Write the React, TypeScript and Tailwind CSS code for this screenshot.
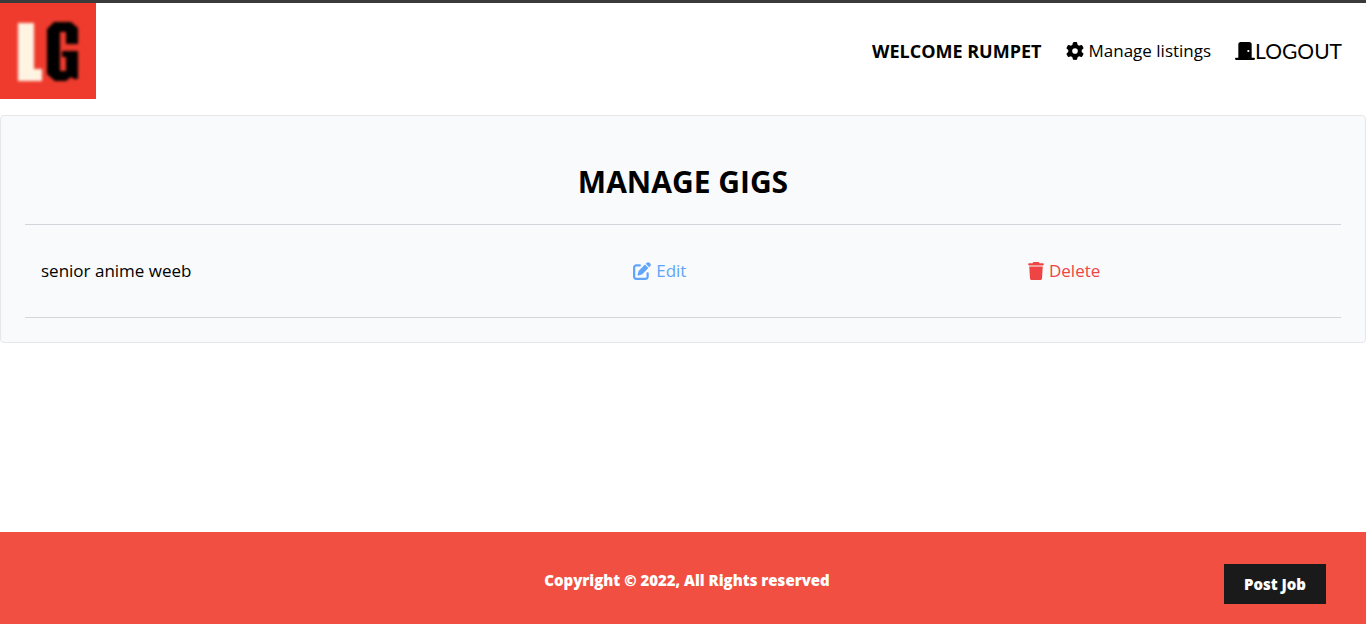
import { FaDoorClosed, FaGear, FaPenToSquare, FaTrash } from "react-icons/fa6";

const gigs = [{ id: 1, title: "senior anime weeb" }];

function Logo() {
  return (
    <svg viewBox="0 0 96 96" className="block size-24" role="img" aria-label="LG">
      <defs>
        <filter id="soft" x="-20%" y="-20%" width="140%" height="140%">
          <feGaussianBlur stdDeviation="1.8" />
        </filter>
      </defs>
      <rect width="96" height="96" fill="#ef3b2d" />
      <g filter="url(#soft)">
        <path d="M18 20H34V66H42V78H18Z" fill="#fff3e2" />
        <path
          d="M54 19H71L78 25V41H66V29H60V68H66V54H62V48H78V76H74L71 74L66 78H55L47 71V26Z"
          fill="#000"
        />
      </g>
    </svg>
  );
}

function Header() {
  return (
    <nav className="flex items-center justify-between">
      <a href="/">
        <Logo />
      </a>
      <ul className="mr-6 flex items-center gap-6 text-[17px] leading-7">
        <li className="text-lg leading-7 font-bold uppercase">Welcome rumpet</li>
        <li>
          <a href="/listings/manage" className="flex items-center gap-[5px]">
            <FaGear className="size-[18px]" />
            Manage listings
          </a>
        </li>
        <li>
          <form>
            <button type="button" className="flex items-center font-['Lato',sans-serif] text-[21px] leading-7">
              <FaDoorClosed className="h-[18px] w-5" />
              LOGOUT
            </button>
          </form>
        </li>
      </ul>
    </nav>
  );
}

export default function App() {
  return (
    <div className="flex min-h-screen flex-col border-t-3 border-[#3a3a3a] bg-white font-['Open_Sans','Noto_Sans',sans-serif] text-black">
      <Header />
      <main className="mt-4 mb-12 flex-1">
        <section className="rounded border border-gray-200 bg-gray-50 p-6">
          <h1 className="my-6 text-center text-3xl leading-9 font-bold uppercase">Manage Gigs</h1>
          <table className="w-full table-fixed border-collapse text-[17px] leading-7">
            <colgroup>
              <col className="w-[45%]" />
              <col className="w-[30%]" />
              <col className="w-[25%]" />
            </colgroup>
            <tbody>
              {gigs.map((gig) => (
                <tr key={gig.id} className="border-y border-gray-300">
                  <td className="px-4 py-8">
                    <a href="/listings/1">{gig.title}</a>
                  </td>
                  <td className="px-4 py-8">
                    <a href="/listings/1/edit" className="inline-flex items-center gap-[5px] align-top text-[#60a5fa]">
                      <FaPenToSquare className="size-[18px]" />
                      Edit
                    </a>
                  </td>
                  <td className="px-4 py-8">
                    <button type="button" className="flex items-center gap-[5px] text-[#ef4444]">
                      <FaTrash className="h-[18px] w-4" />
                      Delete
                    </button>
                  </td>
                </tr>
              ))}
            </tbody>
          </table>
        </section>
      </main>
      <footer className="grid grid-cols-[1fr_auto_1fr] items-start bg-[#f14f42] px-10 pt-8 pb-5 text-[15px] font-extrabold text-white">
        <p className="col-start-2 ml-2 leading-8">Copyright © 2022, All Rights reserved</p>
        <a href="/listings/create" className="justify-self-end bg-[#1a1a1a] px-5 py-2 leading-6">
          Post Job
        </a>
      </footer>
    </div>
  );
}
